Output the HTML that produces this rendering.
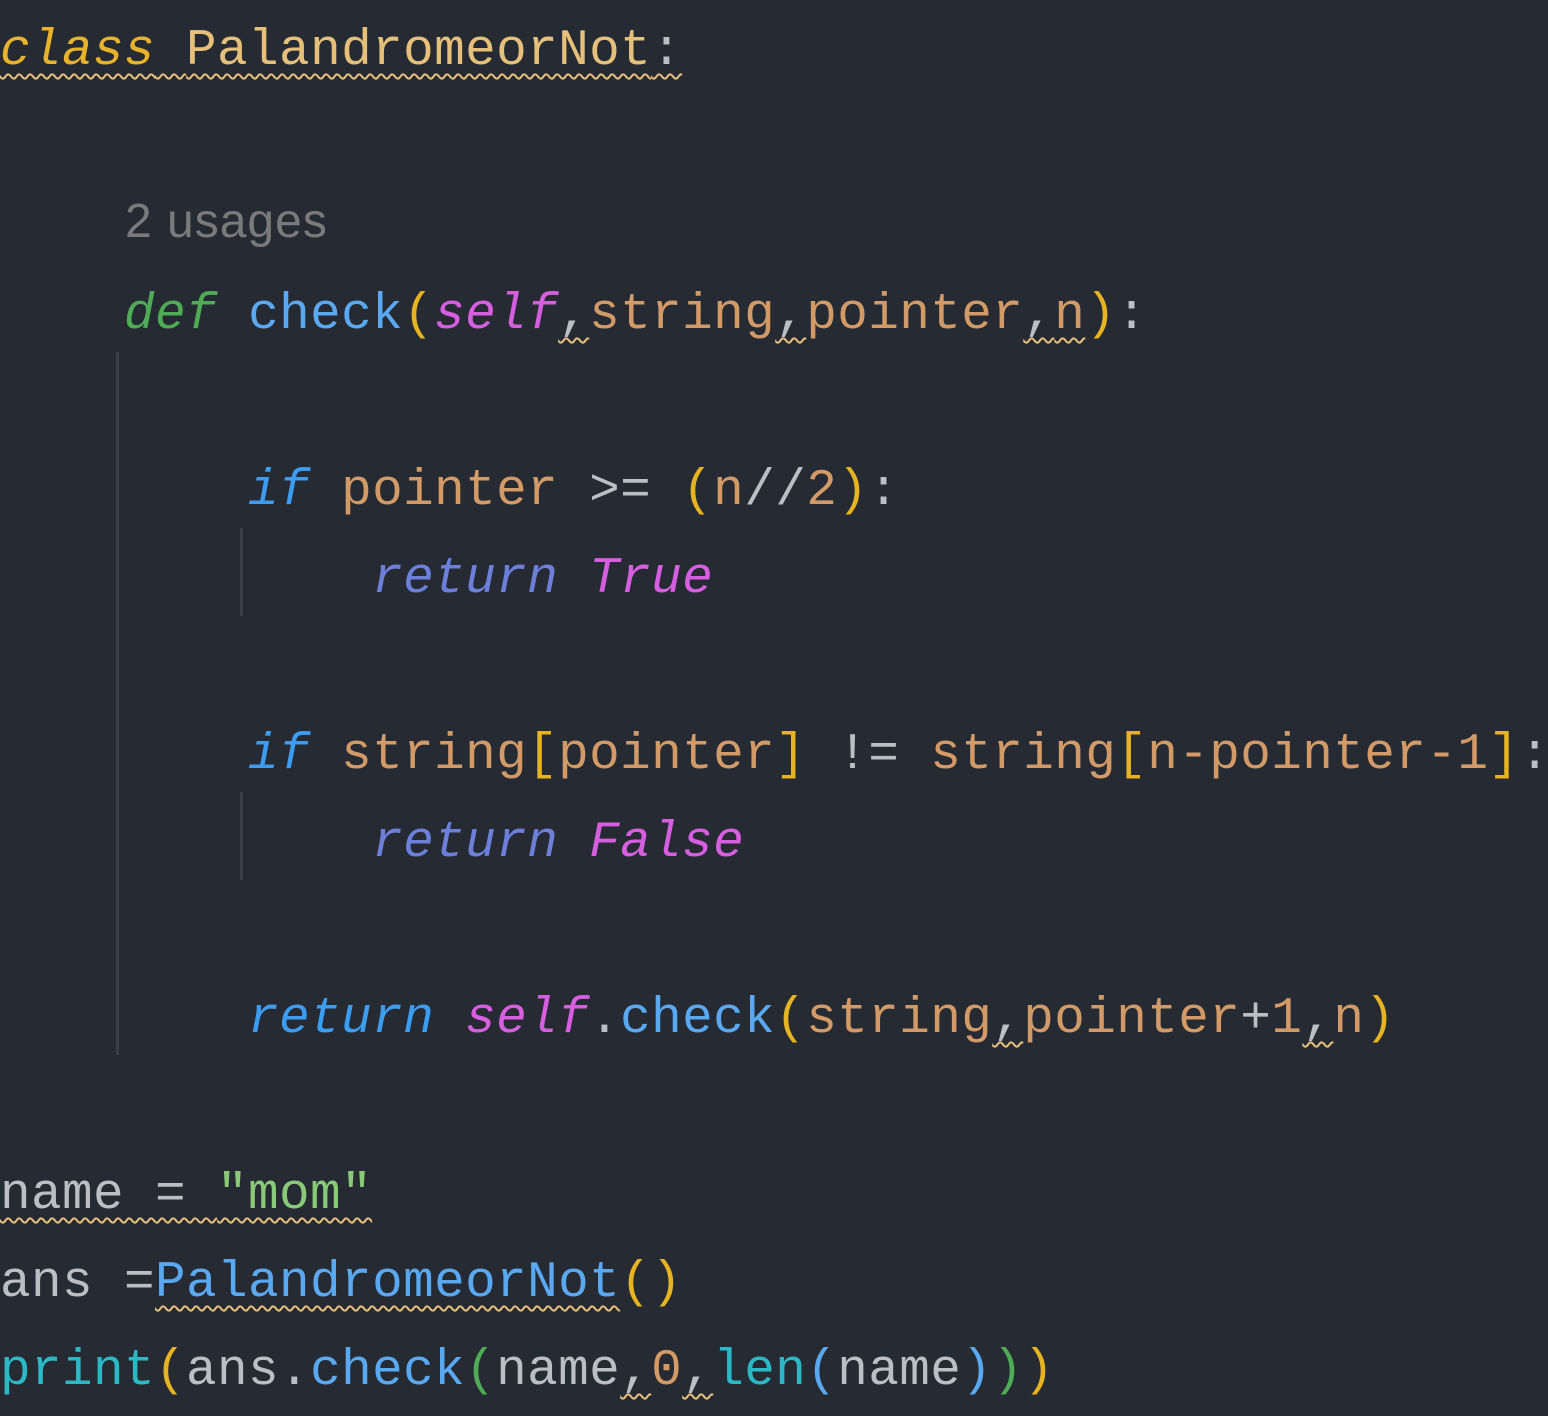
<!DOCTYPE html>
<html><head><meta charset="utf-8"><style>
html,body{margin:0;padding:0;background:#262a33;width:1548px;height:1408px;overflow:hidden}
.l{position:absolute;left:0;height:88px;line-height:88px;white-space:pre;font-family:"Liberation Mono",monospace;font-size:51px;letter-spacing:0.4px;color:#bbbec4}
i{font-style:italic}
.w{text-decoration:underline wavy #e5c07b;text-decoration-thickness:2px;text-underline-offset:9px}
.g{position:absolute;width:3px;background:#3a3e47}
.kc{color:#e8b32c}.cn{color:#e5c07b}.df{color:#4fab55}.fn{color:#5aa8f0}.py{color:#e6b422}
.sf{color:#d55fde}.pr{color:#d19a66}.kw{color:#3b9cf0}.rt{color:#6c7fd9}.st{color:#89ca78}.bi{color:#2bbac5}.pg{color:#4fab55}.op{color:#bbbec4}
.u{position:absolute;left:125px;top:194px;font-family:"Liberation Sans",sans-serif;font-size:48px;letter-spacing:1px;color:#7a7a7a;line-height:56px}
</style></head><body>
<div class="g" style="left:116px;top:352px;height:703px"></div>
<div class="g" style="left:240px;top:528px;height:88px"></div>
<div class="g" style="left:240px;top:792px;height:88px"></div>
<div class="l" style="top:8px"><span class="w"><i class="kc">class</i> <span class="cn">PalandromeorNot</span>:</span></div>
<div class="u">2 usages</div>
<div class="l" style="top:272px">    <i class="df">def</i> <span class="fn">check</span><span class="py">(</span><i class="sf">self</i><span class="w">,</span><span class="pr">string</span><span class="w">,</span><span class="pr">pointer</span><span class="w">,</span><span class="w pr">n</span><span class="py">)</span>:</div>
<div class="l" style="top:448px">        <i class="kw">if</i> <span class="pr">pointer</span> &gt;= <span class="py">(</span><span class="pr">n</span>//<span class="pr">2</span><span class="py">)</span>:</div>
<div class="l" style="top:536px">            <i class="rt">return</i> <i class="sf">True</i></div>
<div class="l" style="top:712px">        <i class="kw">if</i> <span class="pr">string</span><span class="py">[</span><span class="pr">pointer</span><span class="py">]</span> != <span class="pr">string</span><span class="py">[</span><span class="pr">n-pointer-1</span><span class="py">]</span>:</div>
<div class="l" style="top:800px">            <i class="rt">return</i> <i class="sf">False</i></div>
<div class="l" style="top:976px">        <i class="kw">return</i> <i class="sf">self</i>.<span class="fn">check</span><span class="py">(</span><span class="pr">string</span><span class="w">,</span><span class="pr">pointer</span>+<span class="pr">1</span><span class="w">,</span><span class="pr">n</span><span class="py">)</span></div>
<div class="l" style="top:1152px"><span class="w">name = <span class="st">"mom"</span></span></div>
<div class="l" style="top:1240px">ans =<span class="w fn">PalandromeorNot</span><span class="py">()</span></div>
<div class="l" style="top:1328px"><span class="bi">print</span><span class="py">(</span>ans.<span class="fn">check</span><span class="pg">(</span>name<span class="w">,</span><span class="pr">0</span><span class="w">,</span><span class="bi">len</span><span class="fn">(</span>name<span class="fn">)</span><span class="pg">)</span><span class="py">)</span></div>
</body></html>
